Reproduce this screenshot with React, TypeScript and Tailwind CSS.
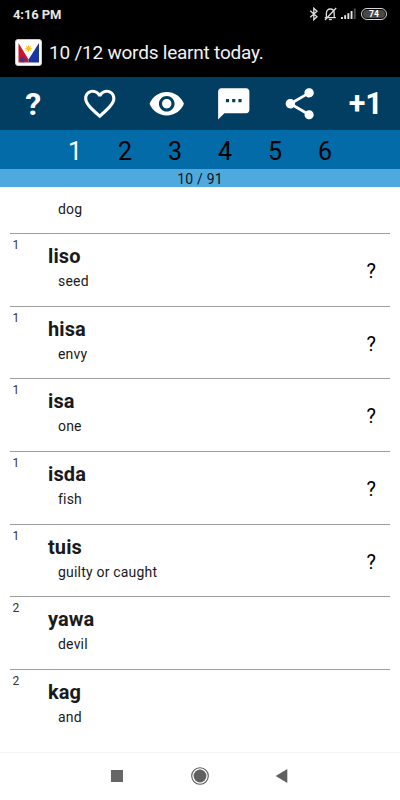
import { MdFavoriteBorder, MdShare, MdSms, MdVisibility } from 'react-icons/md';

interface Word {
  level: number;
  word: string;
  translation: string;
  unknown: boolean;
}

const words: Word[] = [
  { level: 1, word: 'liso', translation: 'seed', unknown: true },
  { level: 1, word: 'hisa', translation: 'envy', unknown: true },
  { level: 1, word: 'isa', translation: 'one', unknown: true },
  { level: 1, word: 'isda', translation: 'fish', unknown: true },
  { level: 1, word: 'tuis', translation: 'guilty or caught', unknown: true },
  { level: 2, word: 'yawa', translation: 'devil', unknown: false },
  { level: 2, word: 'kag', translation: 'and', unknown: false },
];

const levels = [1, 2, 3, 4, 5, 6];

function StatusIcons() {
  return (
    <div className="flex items-center">
      {/* Bluetooth */}
      <svg width="10" height="14" viewBox="0 0 10 14" fill="none" stroke="#dedede" strokeWidth="1.3">
        <path d="M1.2 3.8 8 9.8 4.8 12.8V1.2L8 4.2 1.2 10.2" />
      </svg>
      {/* Muted bell */}
      <svg className="ml-[5px]" width="13" height="14" viewBox="0 0 13 14" fill="none" stroke="#dedede" strokeWidth="1.3">
        <path d="M2.4 10.4V6.2C2.4 3.6 4 2 6.3 2s3.9 1.6 3.9 4.2v4.2M.8 10.6h11M12.2 1 1 13" />
        <path d="M5 12.5h2.8" />
      </svg>
      {/* Signal bars */}
      <svg className="ml-[4px]" width="15" height="12" viewBox="0 0 15 12" fill="#e4e4e4">
        <rect x="0" y="9" width="1.9" height="2" />
        <rect x="3.2" y="7.2" width="1.9" height="3.8" />
        <rect x="6.4" y="5.2" width="1.9" height="5.8" />
        <rect x="9.6" y="3" width="1.9" height="8" />
        <rect x="12.8" y="0.5" width="1.9" height="10.5" fill="#505050" />
      </svg>
      {/* Battery */}
      <div className="ml-[5px] flex h-3 w-[26px] rounded-full border-[1.5px] border-[#d8d8d8] p-px">
        <div className="flex flex-1 items-center justify-center rounded-full bg-[#484848] text-[8.5px] leading-none font-bold text-white">
          74
        </div>
      </div>
    </div>
  );
}

function FlagIcon() {
  return (
    <svg width="27" height="27" viewBox="0 0 27 27">
      <rect x="0.5" y="0.5" width="26" height="26" rx="2.5" fill="#fff" stroke="#d0cbca" />
      <path d="M3.5 4 13.5 20.5v3h-10z" fill="#c9152d" />
      <path d="M24 4v19.5H13.5v-3z" fill="#1736a4" />
      <path d="M5 20.5h5.4M7.7 17.8v5.4" stroke="#2a3c9c" strokeWidth="2" />
      <circle cx="13.5" cy="9.5" r="2.3" fill="#f3c52b" />
      <path
        d="M13.5 6v7M10 9.5h7M11 7l5 5M16 7l-5 5"
        stroke="#f3c52b"
        strokeWidth="0.8"
      />
    </svg>
  );
}

function WordRow({ item }: { item: Word }) {
  return (
    <li className="flex h-[72.65px] border-t border-[#9c9c9c]">
      <span className="w-[38px] pt-[4px] pl-[2.5px] text-[12px] leading-[14px] text-[#333]">{item.level}</span>
      <div className="flex-1 pt-[10px]">
        <p className="text-[20px] leading-6 font-bold tracking-[0.1px]">{item.word}</p>
        <p className="mt-[5px] pl-[10px] text-[14px] leading-4 tracking-[0.2px]">{item.translation}</p>
      </div>
      {item.unknown && <span className="pt-[25px] pr-[14px] text-[20px] leading-6 text-black">?</span>}
    </li>
  );
}

export default function App() {
  return (
    <div className="flex h-[800px] w-[400px] flex-col overflow-hidden bg-white font-['Roboto',sans-serif] text-[#1a1a1a]">
      <header className="h-[77px] bg-black">
        <div className="flex h-7 items-center justify-between pr-[13px] pl-[13px]">
          <span className="text-[13px] leading-none font-bold tracking-[-0.1px] text-[#e6e6e6]">4:16 PM</span>
          <StatusIcons />
        </div>
        <div className="flex items-center pt-[11px] pl-[15px]">
          <FlagIcon />
          <h1 className="ml-[7px] pt-px text-[19px] leading-6 tracking-[-0.22px] text-[#f2f2f2]">
            10 /12 words learnt today.
          </h1>
        </div>
      </header>

      <nav className="grid h-[53px] grid-cols-6 place-items-center bg-[#023e61] text-white">
        <button className="pt-px text-[32px] leading-none font-bold">?</button>
        <button>
          <MdFavoriteBorder size={37.5} />
        </button>
        <button>
          <MdVisibility size={37.5} />
        </button>
        <button>
          <MdSms size={37.5} />
        </button>
        <button>
          <MdShare size={37.5} />
        </button>
        <button className="pt-[2px] pr-[2px] text-[30.5px] leading-none font-bold tracking-[-0.2px]">+1</button>
      </nav>

      <div className="flex h-[39px] justify-center bg-[#026ba8]">
        {levels.map((level) => (
          <button
            key={level}
            className={`w-[50px] pt-[3px] text-[25px] leading-none ${level === 1 ? 'text-white' : 'text-black'}`}
          >
            {level}
          </button>
        ))}
      </div>

      <div className="h-[18px] bg-[#4eaade] text-center text-[14px] leading-[21px] tracking-[0.2px] text-[#111]">
        10 / 91
      </div>

      <main className="flex-1 overflow-hidden px-[10px]">
        <div className="h-[46.1px] pt-[14px] pl-[48px] text-[14px] leading-4 tracking-[0.2px]">dog</div>
        <ul>
          {words.map((item) => (
            <WordRow key={item.word} item={item} />
          ))}
        </ul>
      </main>

      {/* Android navigation bar */}
      <footer className="flex h-12 items-center border-t border-[#f4f4f4] bg-white pb-[2px] pl-[111px]">
        <div className="size-3 bg-[#666]" />
        <svg className="ml-[68px]" width="18" height="18" viewBox="0 0 18 18">
          <circle cx="9" cy="9" r="8.3" fill="#fff" stroke="#555" strokeWidth="1.1" />
          <circle cx="9" cy="9" r="6.4" fill="#606060" />
        </svg>
        <svg className="ml-[66px]" width="13" height="14" viewBox="0 0 13 14">
          <path d="M12.3 0v14L.7 7z" fill="#606060" />
        </svg>
      </footer>
    </div>
  );
}
